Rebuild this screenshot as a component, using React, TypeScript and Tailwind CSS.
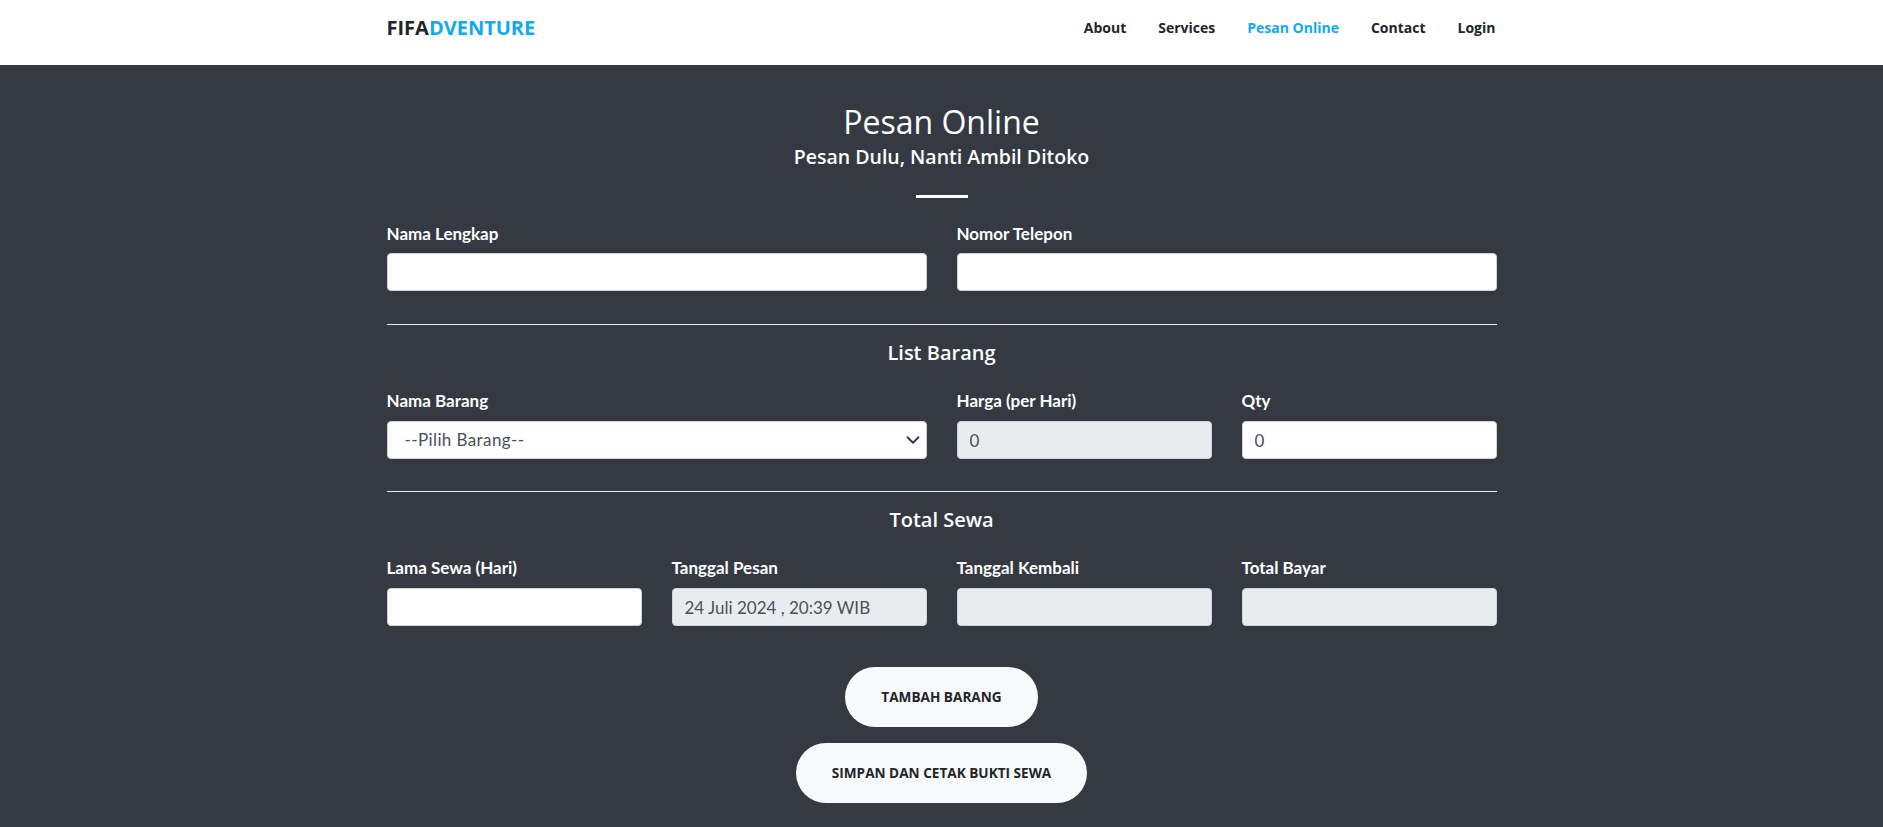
import { ChevronDown } from 'lucide-react';

/**
 * Pesan Online — order form page for FIFADVENTURE rentals.
 */
export default function App() {
  return (
    <div className="flex min-h-screen flex-col bg-[#353a42] font-['Open_Sans',sans-serif]">
      {/* ── Navbar ────────────────────────────────────────────────── */}
      <header className="h-[65px] bg-white">
        <div className="mx-auto flex w-[1110px] items-start justify-between pt-[17px]">
          <a className="text-[20px] font-bold leading-[22px] text-[#212529]">
            FIFA<span className="text-[#14a8f0]">DVENTURE</span>
          </a>
          <nav className="flex gap-8 pr-[1px] text-[14px] font-bold leading-[22px] text-[#212529]">
            {NAV.map((item) => (
              <a key={item} className={item === 'Pesan Online' ? 'text-[#14a8f0]' : ''}>
                {item}
              </a>
            ))}
          </nav>
        </div>
      </header>

      {/* ── Form section ──────────────────────────────────────────── */}
      <section className="flex-1 pt-[38px] pb-[24px] text-white">
        <div className="mx-auto flex w-[1110px] flex-col">
          <h2 className="text-center text-[32px] leading-[38px] font-medium">Pesan Online</h2>
          <p className="mt-[5px] text-center text-[19.5px] leading-[22px] font-semibold">
            Pesan Dulu, Nanti Ambil Ditoko
          </p>
          <div className="mx-auto mt-[27px] h-[3px] w-[52px] bg-white" />

          <div className="mt-[24px] grid grid-cols-2 gap-x-[30px]">
            <Field label="Nama Lengkap" labelGap="mb-[7px]" />
            <Field label="Nomor Telepon" labelGap="mb-[7px]" />
          </div>

          <hr className="mt-[33px] border-0 border-t border-[#e6e7e9]" />
          <h5 className="mt-[16px] text-center text-[20px] leading-[24px] font-semibold">List Barang</h5>

          <div className="mt-[24px] grid grid-cols-4 gap-x-[30px]">
            <div className="col-span-2 flex flex-col">
              <Label text="Nama Barang" />
              <div className="relative">
                <select className="h-[38px] w-full appearance-none rounded-[4px] border border-[#ced4da] bg-white pr-8 pl-[17px] font-['Lato',sans-serif] text-[17px] tracking-[0.4px] text-[#495057] outline-none">
                  <option>--Pilih Barang--</option>
                </select>
                <ChevronDown
                  className="pointer-events-none absolute top-[8px] right-[3px] h-[22px] w-[22px] text-[#343a40]"
                  strokeWidth={2}
                />
              </div>
            </div>
            <Field label="Harga (per Hari)" value="0" disabled />
            <Field label="Qty" value="0" />
          </div>

          <hr className="mt-[32px] border-0 border-t border-[#e6e7e9]" />
          <h5 className="mt-[16px] text-center text-[20px] leading-[24px] font-semibold">Total Sewa</h5>

          <div className="mt-[24px] grid grid-cols-4 gap-x-[30px]">
            <Field label="Lama Sewa (Hari)" />
            <Field label="Tanggal Pesan" value="24 Juli 2024 , 20:39 WIB" disabled />
            <Field label="Tanggal Kembali" disabled />
            <Field label="Total Bayar" disabled />
          </div>

          <div className="mt-[41px] flex flex-col items-center gap-4">
            <PillButton text="Tambah Barang" />
            <PillButton text="Simpan dan Cetak Bukti Sewa" />
          </div>
        </div>
      </section>
    </div>
  );
}

/* ─── Sub-components ──────────────────────────────────────────────────────── */
function Label({ text, gap = 'mb-2' }: { text: string; gap?: string }) {
  return (
    <label className={`${gap} font-['Lato',sans-serif] text-[17px] leading-6 font-bold text-white`}>
      {text}
    </label>
  );
}

function Field({
  label,
  value = '',
  disabled = false,
  labelGap,
}: {
  label: string;
  value?: string;
  disabled?: boolean;
  labelGap?: string;
}) {
  return (
    <div className="flex flex-col">
      <Label text={label} gap={labelGap} />
      <input
        readOnly
        value={value}
        className={`h-[38px] w-full rounded-[4px] border border-[#ced4da] px-3 font-['Lato',sans-serif] text-[17px] text-[#495057] outline-none ${
          disabled ? 'bg-[#e9ecef]' : 'bg-white'
        }`}
      />
    </div>
  );
}

function PillButton({ text }: { text: string }) {
  return (
    <button className="h-[60px] rounded-full bg-[#f8f9fa] px-9 text-[13.6px] font-bold text-[#212529] uppercase">
      {text}
    </button>
  );
}

const NAV = ['About', 'Services', 'Pesan Online', 'Contact', 'Login'];
